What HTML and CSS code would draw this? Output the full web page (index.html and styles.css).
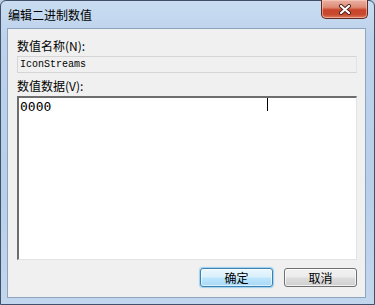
FILE: index.html
```html
<!DOCTYPE html>
<html>
<head>
<meta charset="utf-8">
<link rel="stylesheet" href="styles.css">
</head>
<body>
<div class="window">
  <div class="titlebar">
    <span class="title">编辑二进制数值</span>
    <button class="close" aria-label="关闭">
      <svg width="14" height="11" viewBox="0 0 14 11">
        <path d="M3 2 L11 9 M11 2 L3 9" stroke="#4a1f18" stroke-width="4" stroke-linecap="round" fill="none"/>
        <path d="M3 2 L11 9 M11 2 L3 9" stroke="#ffffff" stroke-width="2.2" stroke-linecap="round" fill="none"/>
      </svg>
    </button>
  </div>
  <div class="client">
    <div class="label">数值名称(N):</div>
    <div class="namebox">IconStreams</div>
    <div class="label label2">数值数据(V):</div>
    <div class="databox">
      <div class="data">0000</div>
      <span class="caret"></span>
    </div>
    <div class="buttons">
      <button class="btn btn-default">确定</button>
      <button class="btn">取消</button>
    </div>
  </div>
</div>
</body>
</html>
```

FILE: styles.css
```css
html, body {
  margin: 0;
  padding: 0;
  width: 375px;
  height: 305px;
  overflow: hidden;
  background: #b9cfe8;
}

.window {
  box-sizing: border-box;
  width: 375px;
  height: 305px;
  display: flex;
  flex-direction: column;
  border: 1px solid #3f5068;
  border-radius: 6px 6px 0 0;
  background: linear-gradient(180deg, #c9dcf1 0%, #bdd3ec 12%, #b7cfe9 60%, #c2d7ee 100%);
  font-family: "Noto Sans CJK SC", "Liberation Sans", sans-serif;
  font-size: 12px;
  color: #000;
}

.titlebar {
  height: 27px;
  flex: none;
  display: flex;
  align-items: flex-start;
  padding: 0 6px 0 7px;
}

.title {
  margin-top: 6px;
  line-height: 16px;
  font-size: 12px;
  color: #000;
}

.close {
  margin-left: auto;
  width: 47px;
  height: 19px;
  margin-top: -1px;
  padding: 0;
  border: 1px solid #5e2a22;
  border-top: none;
  border-radius: 0 0 5px 5px;
  background: linear-gradient(180deg, #eab2a4 0%, #de8c76 40%, #c9452b 55%, #c8492f 80%, #db7a5a 100%);
  box-shadow: inset 0 0 0 1px rgba(255, 210, 200, 0.55);
  display: flex;
  align-items: center;
  justify-content: center;
}

.close svg {
  display: block;
}

.client {
  flex: 1;
  margin: 0 8px 6px 6px;
  border: 1px solid #8ea3bd;
  background: #f0f0f0;
  padding: 10px 8px 10px 9px;
  display: flex;
  flex-direction: column;
}

.label {
  line-height: 14px;
  height: 14px;
  font-family: "Noto Sans CJK SC", sans-serif;
  font-size: 12px;
  color: #000;
}

.label2 {
  margin-top: 6px;
}

.namebox {
  box-sizing: border-box;
  margin-top: 3px;
  height: 17px;
  border: 1px solid #d5d5d5;
  border-right-color: #e3e3e3;
  background: #f0f0f0;
  font-family: "Liberation Mono", monospace;
  font-size: 10px;
  line-height: 15px;
  padding-left: 2px;
  color: #000;
}

.databox {
  position: relative;
  box-sizing: border-box;
  margin-top: 3px;
  height: 164px;
  background: #fff;
  border-style: solid;
  border-width: 2px 1px 1px 2px;
  border-color: #6d6d6d #e3e3e3 #e3e3e3 #6d6d6d;
  padding: 1px 0 0 1px;
}

.data {
  font-family: "DejaVu Sans Mono", monospace;
  font-size: 13px;
  line-height: 15px;
  color: #000;
}

.caret {
  position: absolute;
  left: 248px;
  top: 0;
  width: 1px;
  height: 13px;
  background: #000;
}

.buttons {
  margin-top: 8px;
  display: flex;
  justify-content: flex-end;
  gap: 11px;
}

.btn {
  box-sizing: border-box;
  width: 73px;
  height: 19px;
  padding: 0;
  border: 1px solid #707070;
  border-radius: 3px;
  background: linear-gradient(180deg, #f2f2f2 0%, #ebebeb 48%, #dddddd 52%, #cfcfcf 100%);
  box-shadow: inset 0 0 0 1px rgba(255, 255, 255, 0.7);
  font-family: "Noto Sans CJK SC", sans-serif;
  font-size: 12px;
  line-height: 15px;
  color: #000;
}

.btn-default {
  border-color: #3c7fb1;
  background: linear-gradient(180deg, #eaf6fd 0%, #d9f0fc 48%, #bee6fd 52%, #a7d9f5 100%);
  box-shadow: inset 0 0 0 1px rgba(255, 255, 255, 0.6), 0 0 1px 1px rgba(100, 190, 240, 0.6);
}
```
